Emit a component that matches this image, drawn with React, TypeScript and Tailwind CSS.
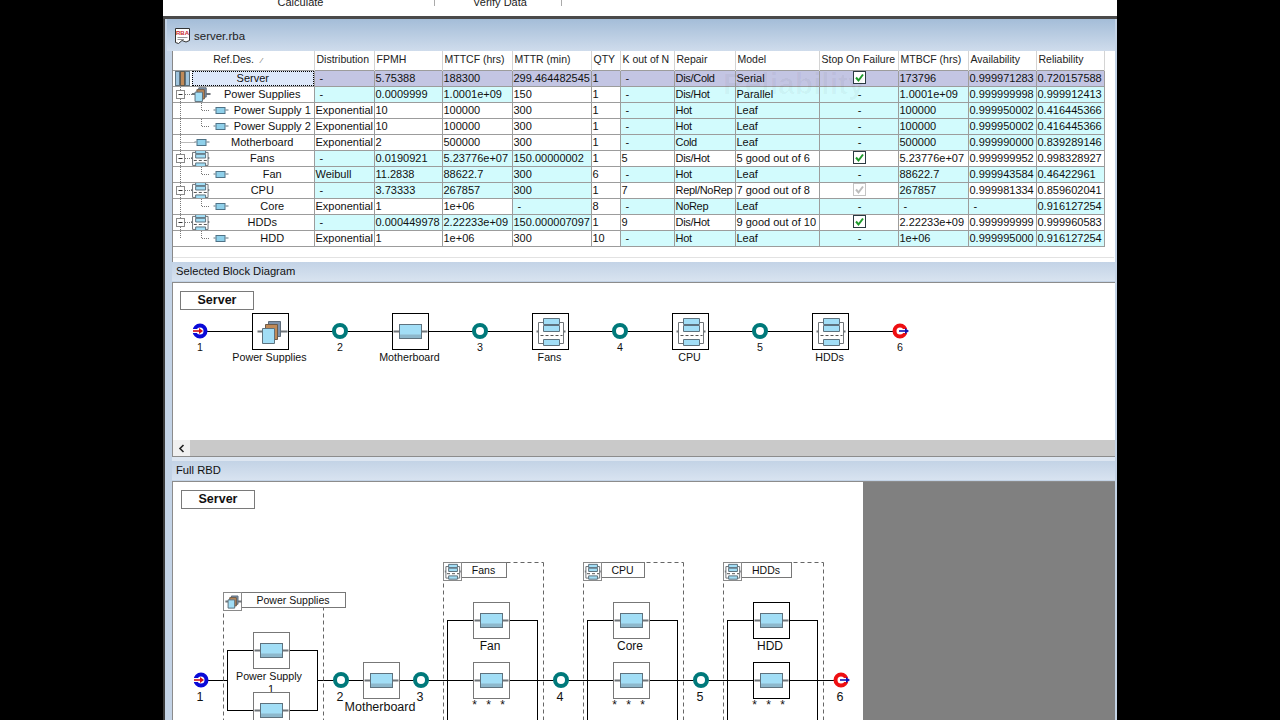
import React from "react";

const FONT = "'Liberation Sans', Arial, sans-serif";
const NS = "non-scaling-stroke";

const Leaf = ({ cx, cy }: { cx: number; cy: number }) => (
  <g transform={`translate(${cx} ${cy})`}>
    <path d="M-17 0H-11M11 0H17" stroke="#6f7478" strokeWidth="2" />
    <rect x="-11" y="-7" width="22" height="14" fill="#a2def6" stroke="#5e727e" />
    <rect x="-10.5" y="3" width="21" height="3.5" fill="#8db8cc" />
  </g>
);

const MiniLeaf = ({ cx, cy }: { cx: number; cy: number }) => (
  <g transform={`translate(${cx} ${cy})`}>
    <path d="M-7 0H-5M5 0H8" stroke="#5e727e" />
    <rect x="-4.5" y="-2.5" width="9" height="6" fill="#8fd0ea" stroke="#4f7286" />
  </g>
);

const Stack = ({ cx, cy, s = 1 }: { cx: number; cy: number; s?: number }) => (
  <g transform={`translate(${cx} ${cy}) scale(${s})`}>
    <path d="M-13 0H-8M8 0H17" stroke="#6f7478" strokeWidth="2" vectorEffect={NS} />
    <rect x="-2" y="-10" width="12" height="15" fill="#7d93ad" stroke="#5e6c7a" vectorEffect={NS} />
    <rect x="-5" y="-7" width="12" height="15" fill="#c08a58" stroke="#6d5a48" vectorEffect={NS} />
    <rect x="-8" y="-3" width="12" height="15" fill="#a2def6" stroke="#5e727e" vectorEffect={NS} />
  </g>
);

const Group = ({ cx, cy, s = 1 }: { cx: number; cy: number; s?: number }) => (
  <g transform={`translate(${cx} ${cy}) scale(${s})`}>
    <rect x="-12" y="-9" width="25" height="21" fill="none" stroke="#6f7478" vectorEffect={NS} />
    <path d="M-14 0H-12M13 0H15" stroke="#6f7478" strokeWidth="2" vectorEffect={NS} />
    <path d="M-10 4H12" stroke="#555" strokeDasharray="3 2" vectorEffect={NS} />
    <rect x="-7" y="-13" width="16" height="6" fill="#a2def6" stroke="#5e727e" vectorEffect={NS} />
    <rect x="-7" y="-6" width="16" height="6" fill="#a2def6" stroke="#5e727e" vectorEffect={NS} />
    <rect x="-7" y="8" width="16" height="6" fill="#a2def6" stroke="#5e727e" vectorEffect={NS} />
  </g>
);

type Kind = "leaf" | "stack" | "group";

const Icon = ({ kind, cx, cy, s = 1 }: { kind: Kind; cx: number; cy: number; s?: number }) =>
  kind === "leaf" ? <Leaf cx={cx} cy={cy} /> : kind === "stack" ? <Stack cx={cx} cy={cy} s={s} /> : <Group cx={cx} cy={cy} s={s} />;

const Block = ({ cx, cy, kind, color = "#000" }: { cx: number; cy: number; kind: Kind; color?: string }) => (
  <g>
    <rect x={cx - 18.5} y={cy - 18.5} width="36" height="36" fill="#fff" stroke={color} />
    <Icon kind={kind} cx={cx - 0.5} cy={cy - 0.5} />
  </g>
);

const Label = ({ x, y, text, size = 10.7, spacing = 0 }: { x: number; y: number; text: string; size?: number; spacing?: number }) => (
  <text x={x} y={y} textAnchor="middle" fontSize={size} letterSpacing={spacing} fill="#111" fontFamily={FONT}>
    {text}
  </text>
);

const Ring = ({ cx, cy }: { cx: number; cy: number }) => (
  <circle cx={cx} cy={cy} r="6" fill="#fff" stroke="#00797a" strokeWidth="4" />
);

const Start = ({ cx, cy }: { cx: number; cy: number }) => (
  <g>
    <circle cx={cx} cy={cy} r="5.5" fill="#fff" stroke="#0a0ad8" strokeWidth="4" />
    <path d={`M${cx - 8} ${cy - 2}H${cx - 2}V${cy + 2}H${cx - 8}Z`} fill="#fff" />
    <path d={`M${cx - 7} ${cy}H${cx}`} stroke="#d01018" strokeWidth="1.6" />
    <path d={`M${cx - 1} ${cy - 3}L${cx + 3} ${cy}L${cx - 1} ${cy + 3}Z`} fill="#d01018" />
  </g>
);

const End = ({ cx, cy }: { cx: number; cy: number }) => (
  <g>
    <circle cx={cx} cy={cy} r="5.5" fill="#fff" stroke="#ee0f12" strokeWidth="4" />
    <path d={`M${cx + 1} ${cy - 2}H${cx + 9}V${cy + 2}H${cx + 1}Z`} fill="#fff" />
    <path d={`M${cx - 1} ${cy}H${cx + 6}`} stroke="#1212b0" strokeWidth="1.6" />
    <path d={`M${cx + 5} ${cy - 3}L${cx + 9} ${cy}L${cx + 5} ${cy + 3}Z`} fill="#1212b0" />
  </g>
);

const TitleBox = ({ x, y, text }: { x: number; y: number; text: string }) => (
  <g>
    <rect x={x + 0.5} y={y + 0.5} width="73" height="18" fill="#fff" stroke="#7a7a7a" />
    <text x={x + 37} y={y + 13} textAnchor="middle" fontSize="12.5" fontWeight="700" fill="#111" fontFamily={FONT}>
      {text}
    </text>
  </g>
);

const SelectedDiagram = () => {
  const ox = 173;
  const oy = 283;
  const blocks: [number, Kind, string][] = [
    [271, "stack", "Power Supplies"],
    [411, "leaf", "Motherboard"],
    [551, "group", "Fans"],
    [691, "group", "CPU"],
    [831, "group", "HDDs"],
  ];
  const rings: [number, string][] = [
    [340, "2"],
    [480, "3"],
    [620, "4"],
    [760, "5"],
  ];
  return (
    <svg width="942" height="157" className="block">
      <g transform={`translate(${-ox} ${-oy})`}>
        <TitleBox x={180} y={291} text="Server" />
        <path d="M200 331.5H900" stroke="#000" />
        {blocks.map(([x, k, t]) => (
          <g key={t}>
            <Block cx={x} cy={332} kind={k} />
            <Label x={x - 1.5} y={361} text={t} />
          </g>
        ))}
        {rings.map(([x, t]) => (
          <g key={t}>
            <Ring cx={x} cy={331} />
            <Label x={x} y={351} text={t} />
          </g>
        ))}
        <Start cx={200} cy={331} />
        <Label x={200} y={351} text="1" />
        <End cx={900} cy={331} />
        <Label x={900} y={351} text="6" />
      </g>
    </svg>
  );
};

const Container = ({
  x,
  top,
  rectTop,
  title,
  labelW,
  kind,
  width = 100,
}: {
  x: number;
  top: number;
  rectTop: number;
  title: string;
  labelW: number;
  kind: Kind;
  width?: number;
}) => (
  <g>
    <path
      d={`M${x + 0.5} ${top + 0.5}V720M${x + width + 0.5} ${top + 0.5}V720M${x + 0.5} ${top + 0.5}H${x + width + 0.5}`}
      stroke="#666"
      strokeDasharray="4 3"
      fill="none"
    />
    <rect x={x + 18.5} y={top + 0.5} width={labelW} height="15" fill="#fff" stroke="#777" />
    <rect x={x + 0.5} y={top + 0.5} width="18" height="18" fill="#fff" stroke="#8a8a8a" />
    <Icon kind={kind} cx={x + 9.5} cy={top + 9.5} s={0.55} />
    <text x={x + 18 + labelW / 2} y={top + 12} textAnchor="middle" fontSize="10.5" fill="#111" fontFamily={FONT}>
      {title}
    </text>
    <rect x={x + 4.5} y={rectTop + 0.5} width="90" height={rectTop === 650 ? 60 : 140} fill="none" stroke="#000" />
  </g>
);

const FullDiagram = () => {
  const ox = 173;
  const oy = 482;
  const groups: [number, string, string, number, string][] = [
    [443, "Fans", "Fan", 45, "#777"],
    [583, "CPU", "Core", 43, "#777"],
    [723, "HDDs", "HDD", 50, "#000"],
  ];
  return (
    <svg width="690" height="238" className="block">
      <g transform={`translate(${-ox} ${-oy})`}>
        <TitleBox x={181} y={490} text="Server" />
        <path d="M201 680.5H227M317 680.5H841" stroke="#000" />
        <Container x={223} top={592} rectTop={650} title="Power Supplies" labelW={104} kind="stack" />
        {groups.map(([x, t, , w]) => (
          <Container key={t} x={x} top={562} rectTop={620} title={t} labelW={w} kind="group" />
        ))}
        <Block cx={272} cy={651} kind="leaf" color="#777" />
        <Label x={269} y={680} text="Power Supply" size={10.7} />
        <Label x={271} y={693} text="1" size={11} />
        <Block cx={272} cy={711} kind="leaf" color="#777" />
        <Ring cx={341} cy={680} />
        <Label x={340} y={701} text="2" size={12.5} />
        <Block cx={382} cy={681} kind="leaf" color="#777" />
        <Label x={380} y={711} text="Motherboard" size={12.5} />
        <Ring cx={421} cy={680} />
        <Label x={420} y={701} text="3" size={12.5} />
        {groups.map(([x, , child, , color]) => (
          <g key={child}>
            <Block cx={x + 49} cy={621} kind="leaf" color={color} />
            <Label x={x + 47} y={650} text={child} size={12} />
            <Block cx={x + 49} cy={681} kind="leaf" color={color} />
            <Label x={x + 47} y={709} text="* * *" size={12} spacing={3} />
          </g>
        ))}
        <Ring cx={561} cy={680} />
        <Label x={560} y={701} text="4" size={12.5} />
        <Ring cx={701} cy={680} />
        <Label x={700} y={701} text="5" size={12.5} />
        <Start cx={201} cy={680} />
        <Label x={200} y={701} text="1" size={12.5} />
        <End cx={841} cy={680} />
        <Label x={840} y={701} text="6" size={12.5} />
      </g>
    </svg>
  );
};

const Check = ({ off }: { off?: boolean }) => (
  <svg width="13" height="13" viewBox="0 0 13 13" className="mx-auto block">
    <rect x="0.5" y="0.5" width="12" height="12" fill="#fff" stroke={off ? "#c4c4c4" : "#2b3a42"} />
    <path d="M3 6.5L5.5 9.5L10 3.5" fill="none" stroke={off ? "#bdbdbd" : "#1d9a2a"} strokeWidth="2" />
  </svg>
);

type TreeKind = "group" | "stack" | "child" | "top";

const Tree = ({ kind, lineDown }: { kind: TreeKind; lineDown: boolean }) => (
  <svg width={kind === "child" ? 58 : 38} height="15" className="block shrink-0">
    <path d={`M7.5 0V${lineDown ? 15 : 7}`} stroke="#777" strokeDasharray="1 1" />
    {kind === "child" && <path d="M28.5 0V7.5H36" stroke="#777" strokeDasharray="1 1" fill="none" />}
    {kind === "top" && <path d="M7.5 7.5H22" stroke="#777" strokeDasharray="1 1" />}
    {(kind === "group" || kind === "stack") && (
      <g>
        <path d="M8 7.5H19" stroke="#777" strokeDasharray="1 1" />
        <rect x="3.5" y="3.5" width="8" height="8" fill="#fff" stroke="#8a8a8a" />
        <path d="M5.5 7.5H9.5" stroke="#333" />
      </g>
    )}
    {kind === "child" && <MiniLeaf cx={47.5} cy={7} />}
    {kind === "top" && <MiniLeaf cx={28.5} cy={7} />}
    {kind === "group" && <Group cx={27} cy={7} s={0.62} />}
    {kind === "stack" && <Stack cx={27} cy={7} s={0.62} />}
  </svg>
);

const ServerIcon = () => (
  <svg width="19" height="15" className="block shrink-0">
    <rect x="2.5" y="0.5" width="4" height="14" fill="#9fc4de" stroke="#5e727e" />
    <rect x="7.5" y="0.5" width="4" height="14" fill="#c08a58" stroke="#5e5a50" />
    <rect x="12.5" y="0.5" width="4" height="14" fill="#9fc4de" stroke="#5e727e" />
  </svg>
);

type Row = {
  name: string;
  tree: TreeKind;
  cells: (string | React.ReactNode)[];
  tint: string;
  lineDown?: boolean;
};

const rows: Row[] = [
  {
    name: "Power Supplies",
    tree: "stack",
    lineDown: true,
    tint: "cccwwccccccc",
    cells: ["-", "0.0009999", "1.0001e+09", "150", "1", "-", "Dis/Hot", "Parallel", "-", "1.0001e+09", "0.999999998", "0.999912413"],
  },
  {
    name: "Power Supply 1",
    tree: "child",
    lineDown: true,
    tint: "wwwwwccccccc",
    cells: ["Exponential", "10", "100000", "300", "1", "-", "Hot", "Leaf", "-", "100000", "0.999950002", "0.416445366"],
  },
  {
    name: "Power Supply 2",
    tree: "child",
    lineDown: true,
    tint: "wwwwwccccccc",
    cells: ["Exponential", "10", "100000", "300", "1", "-", "Hot", "Leaf", "-", "100000", "0.999950002", "0.416445366"],
  },
  {
    name: "Motherboard",
    tree: "top",
    lineDown: true,
    tint: "wwwwwccccccc",
    cells: ["Exponential", "2", "500000", "300", "1", "-", "Cold", "Leaf", "-", "500000", "0.999990000", "0.839289146"],
  },
  {
    name: "Fans",
    tree: "group",
    lineDown: true,
    tint: "ccccwwwwwwww",
    cells: ["-", "0.0190921", "5.23776e+07", "150.00000002", "1", "5", "Dis/Hot", "5 good out of 6", <Check />, "5.23776e+07", "0.999999952", "0.998328927"],
  },
  {
    name: "Fan",
    tree: "child",
    lineDown: true,
    tint: "ccccwccccccc",
    cells: ["Weibull", "11.2838", "88622.7", "300", "6", "-", "Hot", "Leaf", "-", "88622.7", "0.999943584", "0.46422961"],
  },
  {
    name: "CPU",
    tree: "group",
    lineDown: true,
    tint: "ccccwwwwwcww",
    cells: ["-", "3.73333", "267857", "300", "1", "7", "Repl/NoRep", "7 good out of 8", <Check off />, "267857", "0.999981334", "0.859602041"],
  },
  {
    name: "Core",
    tree: "child",
    lineDown: true,
    tint: "wwwcwccccccc",
    cells: ["Exponential", "1", "1e+06", "-", "8", "-", "NoRep", "Leaf", "-", "-", "-", "0.916127254"],
  },
  {
    name: "HDDs",
    tree: "group",
    lineDown: true,
    tint: "ccccwwwwwwww",
    cells: ["-", "0.000449978", "2.22233e+09", "150.000007097", "1", "9", "Dis/Hot", "9 good out of 10", <Check />, "2.22233e+09", "0.999999999", "0.999960583"],
  },
  {
    name: "HDD",
    tree: "child",
    tint: "wwwwwccccccc",
    cells: ["Exponential", "1", "1e+06", "300", "10", "-", "Hot", "Leaf", "-", "1e+06", "0.999995000", "0.916127254"],
  },
];

const headers = ["Distribution", "FPMH", "MTTCF (hrs)", "MTTR (min)", "QTY", "K out of N", "Repair", "Model", "Stop On Failure", "MTBCF (hrs)", "Availability", "Reliability"];
const serverCells: (string | React.ReactNode)[] = ["-", "5.75388", "188300", "299.464482545", "1", "-", "Dis/Cold", "Serial", <Check />, "173796", "0.999971283", "0.720157588"];

const Cell = ({ i, value, tint }: { i: number; value: React.ReactNode; tint: string }) => (
  <td className={`h-[16px] overflow-hidden whitespace-nowrap border border-[#9c9c9c] p-0 ${tint} ${i === 8 ? "text-center" : "text-left"}`}>
    <div
      className={`h-[15px] overflow-hidden leading-[15px] ${i === 8 ? "pl-[2px]" : value === "-" ? "pl-[5px]" : "pl-[1px]"} ${i === 6 ? "tracking-[-0.3px]" : ""}`}
    >
      {value}
    </div>
  </td>
);

const colClasses = ["w-[141px]", "w-[60px]", "w-[68px]", "w-[70px]", "w-[79px]", "w-[29px]", "w-[54px]", "w-[61px]", "w-[84px]", "w-[79px]", "w-[70px]", "w-[68px]", "w-[68px]"];

const DataTable = () => (
  <table className="w-[931px] table-fixed border-collapse text-[11px] text-[#111]">
    <colgroup>
      {colClasses.map((c, i) => (
        <col key={i} className={c} />
      ))}
    </colgroup>
    <thead>
      <tr className="h-[19px]">
        <th className="border-r border-[#d4d4d4] p-0 text-center text-[10.5px] font-normal">
          <span className="relative left-[-9px] text-[#222]">Ref.Des.</span>
          <span className="relative left-[-2px] text-[8px] text-[#666]">⁄</span>
        </th>
        {headers.map((h) => (
          <th key={h} className="overflow-hidden whitespace-nowrap border-r border-[#d4d4d4] p-0 pl-[2px] text-left text-[10.5px] font-normal text-[#222]">
            {h}
          </th>
        ))}
      </tr>
    </thead>
    <tbody>
      <tr className="h-[16px]">
        <td className="border border-l-0 border-[#9c9c9c] p-0">
          <div className="flex h-[15px] items-center">
            <ServerIcon />
            <div className="h-[15px] flex-1 border border-dotted border-black bg-[#dde8fa] text-center leading-[13px]">Server</div>
          </div>
        </td>
        {serverCells.map((c, i) => (
          <Cell key={i} i={i} value={c} tint="bg-[#c3c5e3]" />
        ))}
      </tr>
      {rows.map((r) => (
        <tr key={r.name} className="h-[16px]">
          <td className="overflow-hidden whitespace-nowrap border border-l-0 border-[#9c9c9c] bg-white p-0">
            <div className="flex h-[15px] items-center">
              <Tree kind={r.tree} lineDown={!!r.lineDown} />
              <div className="flex-1 text-center leading-[15px]">{r.name}</div>
            </div>
          </td>
          {r.cells.map((c, i) => (
            <Cell key={i} i={i} value={c} tint={r.tint[i] === "c" ? "bg-[#d2fbfd]" : "bg-white"} />
          ))}
        </tr>
      ))}
    </tbody>
  </table>
);

const DocIcon = () => (
  <svg width="15" height="17" viewBox="0 0 15 17" className="block shrink-0">
    <path d="M0.5 0.5H14.5V12.5L11 14L7 12.5L3.5 15.5L0.5 14.5Z" fill="#fff" stroke="#333" />
    <text x="7.5" y="7" textAnchor="middle" fontSize="6" fontWeight="700" fill="#c8282c" fontFamily={FONT}>
      RBA
    </text>
    <path d="M2.5 9.5H12.5M2.5 11.5H9" stroke="#999" />
  </svg>
);

const Section = ({ title }: { title: string }) => (
  <div className="flex h-[19px] shrink-0 items-center bg-gradient-to-b from-[#c3d3e6] to-[#d8e3f0] pl-[4px] text-[11.2px] text-[#111]">{title}</div>
);

export default function App() {
  return (
    <div className="flex h-[720px] w-[1280px] overflow-hidden bg-black pl-[163px] pr-[163px]" style={{ fontFamily: FONT }}>
      <div className="flex h-full w-[954px] flex-col bg-white">
        <div className="flex h-[16px] shrink-0 text-[11px] text-[#222]">
          <div className="relative h-[16px] w-[272px] overflow-hidden pl-[3px] text-center">
            <span className="relative top-[-4px] block leading-[13px]">Calculate</span>
            <div className="absolute right-0 top-0 h-[6px] w-px bg-[#aaa]" />
          </div>
          <div className="relative h-[16px] w-[127px] overflow-hidden pl-[3px] text-center">
            <span className="relative top-[-4px] block leading-[13px]">Verify Data</span>
            <div className="absolute right-0 top-0 h-[6px] w-px bg-[#aaa]" />
          </div>
        </div>
        <div className="h-[3px] shrink-0 bg-[#4a4a4a]" />
        <div className="flex min-h-0 flex-1 flex-col overflow-hidden border-l-2 border-[#3a3a3a] bg-[#c3d3e6] pl-[7px] pr-[2px]">
          <div className="-ml-[5px] flex h-[32px] shrink-0 items-center gap-[4px] bg-gradient-to-b from-[#a4bdd8] to-[#cfdcec] pl-[8px] pt-[3px] text-[11.5px] text-[#222]">
            <DocIcon />
            <span>server.rba</span>
          </div>
          <div className="relative h-[211px] shrink-0 overflow-hidden border-l border-[#888] bg-white">
            <DataTable />
            <div className="absolute left-[-1px] top-[206px] h-px w-full bg-[#e2e2e2]" />
            <div className="pointer-events-none absolute left-[550px] top-[10px] text-[30px] font-bold text-black/[0.03]">Reliability</div>
          </div>
          <Section title="Selected Block Diagram" />
          <div className="mt-[1px] shrink-0 border-l border-t border-[#8c8c8c] bg-white">
            <SelectedDiagram />
            <div className="flex h-[16px] bg-[#c9c9c9]">
              <div className="flex w-[17px] items-center justify-center bg-[#f0f0f0]">
                <svg width="7" height="9" viewBox="0 0 7 9">
                  <path d="M5.5 1L2 4.5L5.5 8" fill="none" stroke="#222" strokeWidth="1.6" />
                </svg>
              </div>
            </div>
          </div>
          <div className="h-[5px] shrink-0 border-t border-[#8c8c8c] bg-[#dde6f1]" />
          <Section title="Full RBD" />
          <div className="mt-[1px] flex min-h-0 flex-1 border-l border-t border-[#8c8c8c] bg-white">
            <FullDiagram />
            <div className="flex-1 bg-[#808080]" />
          </div>
        </div>
      </div>
    </div>
  );
}
